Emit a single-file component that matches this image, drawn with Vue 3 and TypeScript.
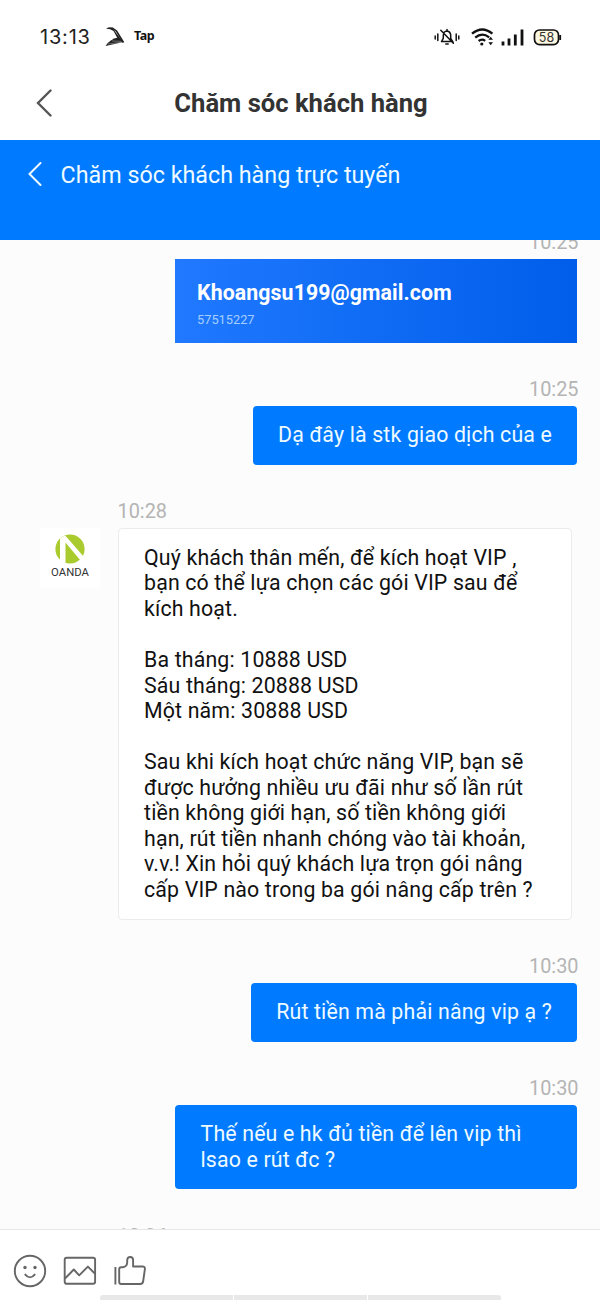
<script setup lang="ts">
interface Message {
  side: 'in' | 'out'
  time: string
  text: string
  kind?: 'card'
  account?: string
}

const messages: Message[] = [
  { side: 'out', time: '10:25', text: 'Khoangsu199@gmail.com', kind: 'card', account: '57515227' },
  { side: 'out', time: '10:25', text: 'Dạ đây là stk giao dịch của e' },
  {
    side: 'in',
    time: '10:28',
    text: `Quý khách thân mến, để kích hoạt VIP ,
bạn có thể lựa chọn các gói VIP sau để
kích hoạt.

Ba tháng: 10888 USD
Sáu tháng: 20888 USD
Một năm: 30888 USD

Sau khi kích hoạt chức năng VIP, bạn sẽ
được hưởng nhiều ưu đãi như số lần rút
tiền không giới hạn, số tiền không giới
hạn, rút tiền nhanh chóng vào tài khoản,
v.v.! Xin hỏi quý khách lựa trọn gói nâng
cấp VIP nào trong ba gói nâng cấp trên ?`,
  },
  { side: 'out', time: '10:30', text: 'Rút tiền mà phải nâng vip ạ ?' },
  { side: 'out', time: '10:30', text: 'Thế nếu e hk đủ tiền để lên vip thì\nlsao e rút đc ?' },
  { side: 'in', time: '10:34', text: '' },
]
</script>

<template>
  <div class="screen">
    <div class="status">
      <span class="clock">13:13</span>
      <svg class="wing" width="20" height="20" viewBox="0 0 20 20">
        <path d="M1 1.8Q4 -.2 7 .6L18.5 15.5L14 14L8.500 4Q5 1.600 1 1.800Z" fill="#222" />
        <path d="M7 .8L11.500 4L18.500 15.500" fill="none" stroke="#222" stroke-width="1.600" />
        <path d="M18.500 15L.5 19Q5 12 13 10.500Z" fill="#222" />
        <path d="M17 15.200L3 17M16 14.300L7 14" stroke="#fff" stroke-width=".35" />
      </svg>
      <span class="tap">Tap</span>
      <svg class="tray" width="130" height="24" viewBox="0 0 130 24" fill="none" stroke="#111">
        <g stroke-width="1.5" stroke-linecap="round">
          <path d="M1.2 11v3M3.8 9v6.5M22.2 9v6.5M24.8 11v3" />
          <path d="M7.5 16.5h11.2l-2-3.2v-3.5q-.4-3.4-3.7-3.8-1.8 0-3 1.4M9.3 9.8v3.5l-1.8 3.2M13 4.5v1.2M11.8 19h2.4M6.8 5.2l12.6 13" />
        </g>
        <g stroke-width="2.3">
          <path d="M38 8.7q10.3-8.4 20.4 0" />
          <path d="M41.2 12.6q6.9-5.8 14-.2" />
          <path d="M44.6 16q3.4-2.6 6.6-.2" />
        </g>
        <circle cx="47.8" cy="19" r="1.6" fill="#111" stroke="none" />
        <path d="M54.4 14.8l2.3-3 2.3 3zM54.4 17.2l2.3 3 2.3-3z" fill="#111" stroke="none" />
        <path d="M69 16.5v3.9M75 13.5v6.9M81.3 9.6v10.8M88 4.5v16" stroke-width="2.8" />
        <rect x="100.5" y="5" width="24" height="14.6" rx="5" fill="#fff8e0" stroke-width="1.7" />
        <path d="M126.2 10v5" stroke-width="1.8" />
        <text x="112.5" y="16.8" text-anchor="middle" class="charge">58</text>
      </svg>
    </div>

    <header class="titlebar">
      <svg width="18" height="28" viewBox="0 0 18 28"><path d="M15.5 1.5 L3 14 L15.5 26.5" /></svg>
      <h1>Chăm sóc khách hàng</h1>
    </header>

    <div class="banner">
      <svg width="16" height="24" viewBox="0 0 16 24"><path d="M13.5 1 L2.5 12 L13.5 23" /></svg>
      <span>Chăm sóc khách hàng trực tuyến</span>
    </div>

    <main class="chat">
      <div class="list">
        <div v-for="(m, i) in messages" :key="i" class="msg" :class="m.side">
          <div class="time">{{ m.time }}</div>
          <div v-if="m.kind === 'card'" class="card">
            <strong>{{ m.text }}</strong>
            <small>{{ m.account }}</small>
          </div>
          <div v-else-if="m.text" class="row">
            <div v-if="m.side === 'in'" class="avatar">
              <svg width="30" height="30" viewBox="0 0 30 30">
                <circle cx="15" cy="15" r="14.6" fill="#a9cb2d" />
                <path d="M5 4.5L10 1.2L29 23L25.5 26.5L10.5 8.6V30L5 27Z" fill="#fff" />
              </svg>
              <span>OANDA</span>
            </div>
            <div class="bubble">{{ m.text }}</div>
          </div>
        </div>
      </div>
    </main>

    <footer class="composer">
      <div class="tools">
        <svg width="34" height="34" viewBox="0 0 34 34">
          <circle cx="17" cy="17" r="15.2" />
          <path d="M11.8 20.2q5.2 6.4 10.4 0" />
          <circle cx="12" cy="13.5" r="1.7" class="dot" />
          <circle cx="22" cy="13.5" r="1.7" class="dot" />
        </svg>
        <svg width="34" height="34" viewBox="0 0 34 34">
          <rect x="1.7" y="3.8" width="30.4" height="26" rx="2" />
          <path d="M2 24.5l8.8-9 5.4 5.8 8.7-8.7 7 7" />
        </svg>
        <svg width="34" height="34" viewBox="0 0 34 34">
          <path d="M2.4 13v17.5M6.2 15.2q0-2 2-2h1.5q4.3-.8 4.5-4.5V6q.2-3 3-3 2.9 0 2.9 3v6.5h9.4q2.7 0 2.4 2.5l-1.7 12q-.4 3-3 3H8.2q-2 0-2-2z" />
        </svg>
      </div>
      <div class="nav"><i></i><i></i><i></i></div>
    </footer>
  </div>
</template>

<style>
body { margin: 0; background: #fff; }
</style>

<style scoped>
.screen {
  width: 600px;
  height: 1300px;
  display: flex;
  flex-direction: column;
  overflow: hidden;
  background: #fff;
  font-family: Roboto, "Noto Sans", sans-serif;
}
.status {
  height: 66px;
  flex: none;
  display: flex;
  align-items: center;
  padding: 7px 36px 0 40px;
  box-sizing: border-box;
}
.clock { font: 400 20px/24px Inter, sans-serif; color: #222; width: 52px; letter-spacing: .8px; white-space: nowrap; }
.wing { margin-left: 13px; }
.tap { font: 700 12.5px/20px "Noto Sans", sans-serif; color: #111; margin: -1px 0 0 9px; letter-spacing: -.5px; }
.tray { margin-left: auto; }
.charge { font: 400 12.5px Inter, sans-serif; fill: #333; stroke: none; }
.titlebar {
  height: 74.4px;
  flex: none;
  display: flex;
  align-items: center;
  box-sizing: border-box;
  padding-left: 35px;
}
.titlebar svg, .banner svg { fill: none; stroke: #555; stroke-width: 2.4; stroke-linecap: round; }
.titlebar h1 { margin: 0 51px 0 0; flex: 1; text-align: center; font-size: 25.6px; line-height: 30px; font-weight: 700; color: #333; }
.banner {
  height: 100px;
  flex: none;
  box-sizing: border-box;
  display: flex;
  align-items: flex-start;
  padding: 22px 0 0 27px;
  background: #007aff;
  color: #eefaff;
}
.banner svg { stroke: #eefaff; stroke-width: 2; }
.banner span { font-size: 23.3px; line-height: 26px; margin: 0 0 0 17.5px; white-space: nowrap; }
.chat { flex: 1; min-height: 0; overflow: hidden; background: #fcfcfc; }
.list { margin-top: -44px; display: flex; flex-direction: column; }
.msg { padding: 35px 23px 0 0; display: flex; flex-direction: column; }
.msg.in { align-items: flex-start; padding-left: 40px; }
.msg.out { align-items: flex-end; }
.msg:last-child { padding-top: 36px; }
.time { font-size: 19.9px; line-height: 24px; margin: 0 -1.5px 4px 0; color: #b4b4b4; }
.in .time { margin-left: 77.5px; }
.row { display: flex; align-items: flex-start; }
.bubble {
  box-sizing: border-box;
  max-width: 402px;
  padding: 16.6px 25px 16.6px 25.5px;
  border-radius: 4px;
  font-size: 21.33px;
  line-height: 25.57px;
  letter-spacing: .155px;
  white-space: pre;
}
.out .bubble { background: #007aff; color: #eefaff; }
.out:nth-child(5) .bubble { width: 402px; }
.in .bubble { width: 454px; max-width: none; margin-left: 18px; padding: 16.2px 25px; border: 1px solid #ececec; background: #fff; color: #111; }
.card {
  width: 402px;
  height: 83.4px;
  box-sizing: border-box;
  padding: 21px 22px 0;
  display: flex;
  flex-direction: column;
  background: linear-gradient(90deg, #2079ff, #005eea);
  color: #fff;
}
.card strong { font-size: 21.33px; line-height: 26px; letter-spacing: .08px; }
.card small { font-size: 12.8px; line-height: 16px; margin-top: 6px; color: #a5ceff; }
.avatar {
  width: 60px;
  height: 60px;
  background: #fff;
  display: flex;
  flex-direction: column;
  align-items: center;
  padding-top: 6px;
  box-sizing: border-box;
}
.avatar span { font: 400 11.3px/14px Roboto, sans-serif; color: #333; margin-top: 2px; }
.composer {
  height: 71px;
  flex: none;
  box-sizing: border-box;
  border-top: 1px solid #e6e6e6;
  display: flex;
  flex-direction: column;
  justify-content: space-between;
  background: #fff;
}
.tools { display: flex; gap: 16px; padding: 23.5px 0 0 13px; }
.tools svg { fill: none; stroke: #666; stroke-width: 1.9; stroke-linejoin: round; }
.tools .dot { fill: #666; stroke: none; }
.nav { width: 401px; height: 5px; margin: 0 auto; display: flex; gap: 1px; border-radius: 3px 3px 0 0; overflow: hidden; }
.nav i { flex: 1; background: #e8e8e8; }
</style>
